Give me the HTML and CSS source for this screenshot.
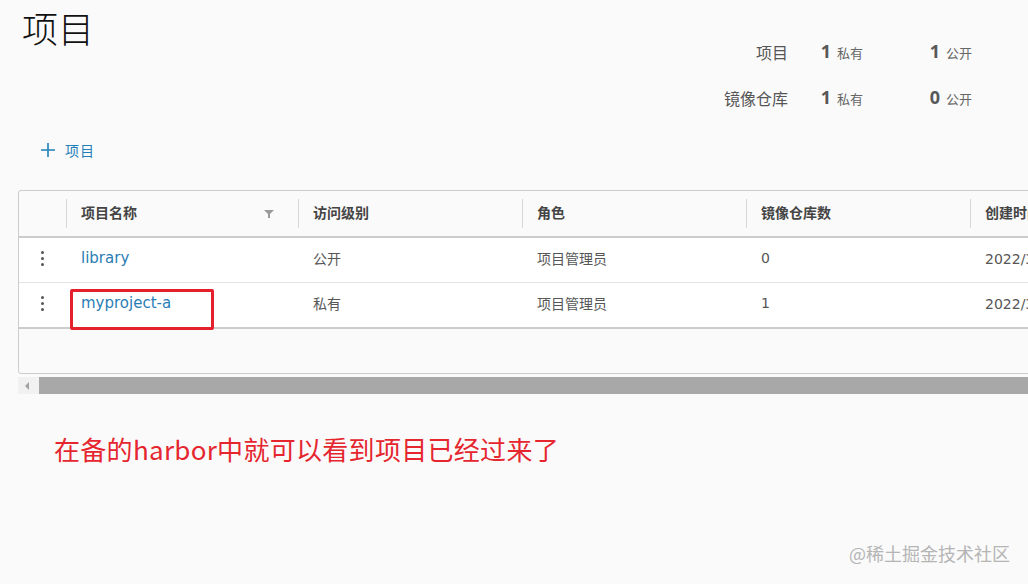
FILE: index.html
```html
<!DOCTYPE html>
<html lang="zh-CN">
<head>
  <meta charset="UTF-8">
  <meta name="viewport" content="width=device-width, initial-scale=1.0">
  <title>项目</title>
  <link rel="stylesheet" href="styles.css">
</head>
<body>
  <div class="page">
    <div class="page-header">
      <h1>项目</h1>

      <div class="summary">
        <span class="summary-label">项目</span>
        <span class="summary-num">1</span>
        <span class="summary-unit">私有</span>
        <span class="summary-num">1</span>
        <span class="summary-unit">公开</span>

        <span class="summary-label">镜像仓库</span>
        <span class="summary-num">1</span>
        <span class="summary-unit">私有</span>
        <span class="summary-num">0</span>
        <span class="summary-unit">公开</span>
      </div>
    </div>

    <button class="add-btn">
      <svg width="14" height="14" viewBox="0 0 14 14">
        <path d="M7 0 V14 M0 7 H14" stroke="#1f7fb8" stroke-width="1.6" fill="none"/>
      </svg>
      <span>项目</span>
    </button>

    <div class="datagrid">
      <table>
        <colgroup>
          <col style="width: 47px">
          <col style="width: 232px">
          <col style="width: 224px">
          <col style="width: 224px">
          <col style="width: 224px">
          <col style="width: 224px">
        </colgroup>
        <thead>
          <tr>
            <th></th>
            <th>
              项目名称
              <svg class="filter-icon" width="10" height="8" viewBox="0 0 10 8">
                <path d="M0 0 H10 L6 4 V8 H4 V4 Z" fill="#9a9a9a"/>
              </svg>
            </th>
            <th>访问级别</th>
            <th>角色</th>
            <th>镜像仓库数</th>
            <th>创建时间</th>
          </tr>
        </thead>
        <tbody>
          <tr>
            <td class="row-actions"><span class="dots"><i></i><i></i><i></i></span></td>
            <td><a href="#">library</a></td>
            <td>公开</td>
            <td>项目管理员</td>
            <td>0</td>
            <td>2022/3/21 下午3:12</td>
          </tr>
          <tr class="last">
            <td class="row-actions"><span class="dots"><i></i><i></i><i></i></span></td>
            <td class="marked"><a href="#">myproject-a</a><span class="mark-box"></span></td>
            <td>私有</td>
            <td>项目管理员</td>
            <td>1</td>
            <td>2022/3/22 上午10:05</td>
          </tr>
        </tbody>
      </table>
      <div class="grid-footer"></div>
    </div>

    <div class="hscroll">
      <span class="hscroll-arrow"></span>
      <span class="hscroll-thumb"></span>
    </div>

    <p class="note">在备的harbor中就可以看到项目已经过来了</p>
  </div>

  <div class="watermark">@稀土掘金技术社区</div>
</body>
</html>
```

FILE: styles.css
```css
html, body {
  margin: 0;
  padding: 0;
  height: 100%;
  overflow: hidden;
}

body {
  background-color: #fafafa;
  font-family: "Noto Sans", "Noto Sans CJK SC", sans-serif;
  color: #565656;
  position: relative;
}

.page {
  overflow: hidden;
}

.page-header {
  display: flex;
  justify-content: space-between;
  align-items: flex-start;
}

.page-header h1 {
  margin: 9px 0 0 22px;
  font-family: "Noto Sans CJK SC", sans-serif;
  font-size: 36px;
  line-height: 36px;
  font-weight: 300;
  color: #111;
}

.summary {
  display: grid;
  grid-template-columns: 90px 43px 89px 20px 48px;
  grid-auto-rows: 46px;
  align-items: center;
  margin: 29px 40px 0 0;
}

.summary-label {
  text-align: right;
  font-size: 16px;
  color: #555;
  padding-bottom: 1px;
}

.summary-num {
  text-align: right;
  font-size: 18px;
  font-weight: bold;
  color: #585858;
  padding-bottom: 3px;
}

.summary-unit {
  padding-left: 6px;
  font-size: 13px;
  color: #666;
}

.add-btn {
  display: flex;
  align-items: center;
  gap: 10px;
  height: 28px;
  margin: 15px 0 0 41px;
  padding: 0;
  border: none;
  background: none;
  font-family: inherit;
  font-size: 14px;
  letter-spacing: 1px;
  color: #1f7fb8;
  cursor: pointer;
}

.datagrid {
  margin: 26px 0 0 18px;
  width: 1200px;
  border: 1px solid #ccc;
  border-radius: 3px;
  background: #fafafa;
}

.datagrid table {
  table-layout: fixed;
  border-collapse: collapse;
  width: 1175px;
}

.datagrid th {
  position: relative;
  height: 41px;
  padding: 0 15px 4px;
  text-align: left;
  font-size: 14px;
  font-weight: bold;
  color: #444;
  border-bottom: 2px solid #ccc;
}

.datagrid th + th::before {
  content: "";
  position: absolute;
  left: 0;
  top: 8px;
  bottom: 8px;
  width: 1px;
  background: #d7d7d7;
}

.filter-icon {
  position: absolute;
  right: 24px;
  top: 19px;
}

.datagrid td {
  height: 39px;
  padding: 0 15px 5px;
  font-family: "DejaVu Sans", "Noto Sans CJK SC", sans-serif;
  font-size: 14px;
  color: #565656;
  background: #fff;
  border-bottom: 1px solid #e4e4e4;
  white-space: nowrap;
  overflow: hidden;
}

.datagrid tr.last td {
  border-bottom: 2px solid #ccc;
}

.datagrid td a {
  font-size: 15px;
  color: #2a7db5;
  text-decoration: none;
}

.datagrid td.row-actions {
  padding: 0 0 4px;
  text-align: center;
}

.dots {
  display: inline-flex;
  flex-direction: column;
  gap: 3px;
  vertical-align: middle;
  margin-right: 1px;
}

.dots i {
  width: 3px;
  height: 3px;
  border-radius: 50%;
  background: #555;
}

.datagrid td.marked {
  position: relative;
  overflow: visible;
}

.mark-box {
  position: absolute;
  left: 4px;
  top: 6px;
  width: 138px;
  height: 35px;
  border: 3px solid #e3202b;
  border-radius: 2px;
}

.grid-footer {
  height: 44px;
}

.hscroll {
  display: flex;
  align-items: center;
  margin: 3px 0 0 18px;
  height: 17px;
  background: #f1f1f1;
}

.hscroll-arrow {
  width: 0;
  height: 0;
  margin: 0 10px 0 7px;
  border-top: 4px solid transparent;
  border-bottom: 4px solid transparent;
  border-right: 4px solid #a3a3a3;
}

.hscroll-thumb {
  flex: 1;
  height: 17px;
  background: #a8a8a8;
}

.note {
  margin: 37px 0 0 54px;
  font-family: "Noto Sans CJK SC", sans-serif;
  font-size: 26px;
  line-height: 36px;
  letter-spacing: 0.3px;
  color: #e5262f;
}

.watermark {
  position: absolute;
  right: 18px;
  bottom: 18px;
  font-family: "Noto Sans CJK SC", sans-serif;
  font-size: 18px;
  color: #b5b5b5;
}
```
